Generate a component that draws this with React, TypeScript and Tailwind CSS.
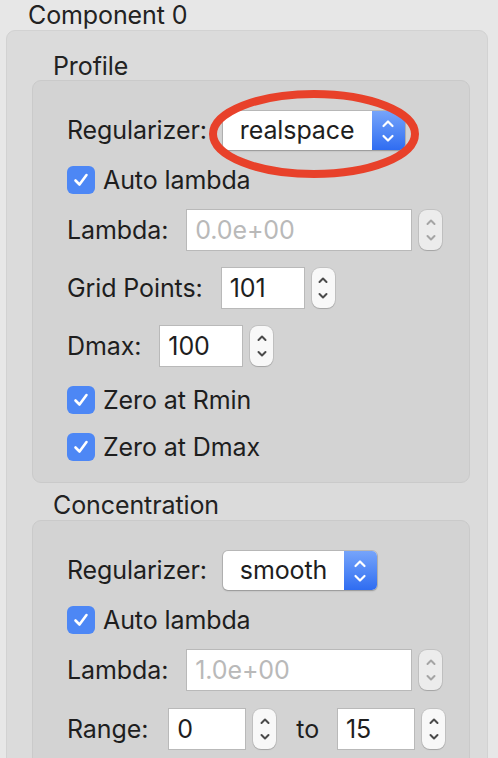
import React from "react";

const font = { fontFamily: "Inter, 'Noto Sans', sans-serif" };

function StepperChevrons({ color }: { color: string }) {
  return (
    <svg width="12" height="28" viewBox="0 0 12 28" fill="none">
      <path d="M2.5 8 L6 4.5 L9.5 8" stroke={color} strokeWidth="2" strokeLinecap="round" strokeLinejoin="round" />
      <path d="M2.5 20 L6 23.5 L9.5 20" stroke={color} strokeWidth="2" strokeLinecap="round" strokeLinejoin="round" />
    </svg>
  );
}

function Stepper({ disabled }: { disabled?: boolean }) {
  return (
    <div
      className={`flex h-[40px] w-[23px] items-center justify-center rounded-[8px] shadow-[0_0_0_1px_rgba(0,0,0,0.08),0_1px_1px_rgba(0,0,0,0.15)] ${
        disabled ? "bg-[#ececec]" : "bg-[#f8f8f8]"
      }`}
    >
      <StepperChevrons color={disabled ? "#a5a5a5" : "#4a4a4a"} />
    </div>
  );
}

function NumberField({
  value,
  width,
  disabled,
}: {
  value: string;
  width: string;
  disabled?: boolean;
}) {
  return (
    <div className="flex items-center gap-[7px]">
      <div
        className={`flex h-[42px] items-center border border-[#b9b9b9] bg-white pl-[8px] ${width} ${
          disabled ? "text-[#b9b9b9]" : "text-[#1e1e1e]"
        }`}
      >
        {value}
      </div>
      <Stepper disabled={disabled} />
    </div>
  );
}

function Select({ value, width }: { value: string; width: string }) {
  return (
    <div
      className={`flex h-[39px] items-stretch overflow-hidden rounded-[5px] bg-white shadow-[0_0_0_1px_rgba(0,0,0,0.12),0_1px_2px_rgba(0,0,0,0.2)] ${width}`}
    >
      <div className="flex flex-1 items-center pl-[17px] text-[#1e1e1e]">{value}</div>
      <div className="flex w-[33px] items-center justify-center bg-gradient-to-b from-[#76a4fa] to-[#2f6cf1]">
        <svg width="14" height="30" viewBox="0 0 14 30" fill="none">
          <path d="M2.5 10 L7 5.5 L11.5 10" stroke="white" strokeWidth="2.2" strokeLinecap="round" strokeLinejoin="round" />
          <path d="M2.5 20 L7 24.5 L11.5 20" stroke="white" strokeWidth="2.2" strokeLinecap="round" strokeLinejoin="round" />
        </svg>
      </div>
    </div>
  );
}

function Check({ label }: { label: string }) {
  return (
    <div className="flex h-[28px] items-center gap-[8px]">
      <div className="flex h-[28px] w-[28px] items-center justify-center rounded-[6px] bg-[#4d87f5]">
        <svg width="18" height="18" viewBox="0 0 18 18" fill="none">
          <path d="M3.5 9.5 L7.5 13.5 L14.5 4" stroke="white" strokeWidth="2.6" strokeLinecap="round" strokeLinejoin="round" />
        </svg>
      </div>
      <span className="text-[#1e1e1e]">{label}</span>
    </div>
  );
}

function Row({
  label,
  gap = "gap-[18px]",
  children,
}: {
  label: string;
  gap?: string;
  children: React.ReactNode;
}) {
  return (
    <div className={`flex items-center ${gap}`}>
      <span className="text-[#1e1e1e]">{label}</span>
      {children}
    </div>
  );
}

export default function App() {
  return (
    <div
      className="relative min-h-screen overflow-hidden bg-[#e7e7e7] pl-[6px] pr-[10px] text-[25px] leading-none tracking-[-0.1px]"
      style={font}
    >
      <div className="flex h-[30px] items-center pl-[22px] text-[#222]">Component 0</div>

      <div className="rounded-[9px] border border-[#d2d2d2] bg-[#dbdbdb] pb-[40px] pl-[25px] pr-[17px]">
        <div className="h-[49px] pl-[21px] pt-[23px] text-[#222]">Profile</div>

        <div className="flex flex-col rounded-[9px] border border-[#cacaca] bg-[#d3d3d3] pb-[21px] pl-[34px] pt-[30px]">
          <Row label="Regularizer:" gap="gap-[16px]">
            <Select value="realspace" width="w-[182px]" />
          </Row>
          <div className="mt-[16px]">
            <Check label="Auto lambda" />
          </div>
          <div className="mt-[15px]">
            <Row label="Lambda:">
              <NumberField value="0.0e+00" width="w-[226px]" disabled />
            </Row>
          </div>
          <div className="mt-[16px]">
            <Row label="Grid Points:">
              <NumberField value="101" width="w-[84px]" />
            </Row>
          </div>
          <div className="mt-[16px]">
            <Row label="Dmax:">
              <NumberField value="100" width="w-[84px]" />
            </Row>
          </div>
          <div className="mt-[19px]">
            <Check label="Zero at Rmin" />
          </div>
          <div className="mt-[19px]">
            <Check label="Zero at Dmax" />
          </div>
        </div>

        <div className="h-[37px] pl-[21px] pt-[10px] text-[#222]">Concentration</div>

        <div className="flex flex-col rounded-[9px] border border-[#cacaca] bg-[#d3d3d3] pb-[30px] pl-[34px] pt-[30px]">
          <Row label="Regularizer:" gap="gap-[16px]">
            <Select value="smooth" width="w-[154px]" />
          </Row>
          <div className="mt-[16px]">
            <Check label="Auto lambda" />
          </div>
          <div className="mt-[15px]">
            <Row label="Lambda:">
              <NumberField value="1.0e+00" width="w-[226px]" disabled />
            </Row>
          </div>
          <div className="mt-[17px] flex items-center">
            <span className="text-[#1e1e1e]">Range:</span>
            <div className="ml-[20px]">
              <NumberField value="0" width="w-[78px]" />
            </div>
            <span className="ml-[20px] text-[#1e1e1e]">to</span>
            <div className="ml-[18px]">
              <NumberField value="15" width="w-[78px]" />
            </div>
          </div>
        </div>
      </div>

      <svg
        className="pointer-events-none absolute left-[204px] top-[86px]"
        width="220"
        height="96"
        viewBox="0 0 220 96"
      >
        <ellipse cx="110" cy="48" rx="101" ry="40" fill="none" stroke="#e8412a" strokeWidth="8" />
      </svg>
    </div>
  );
}
